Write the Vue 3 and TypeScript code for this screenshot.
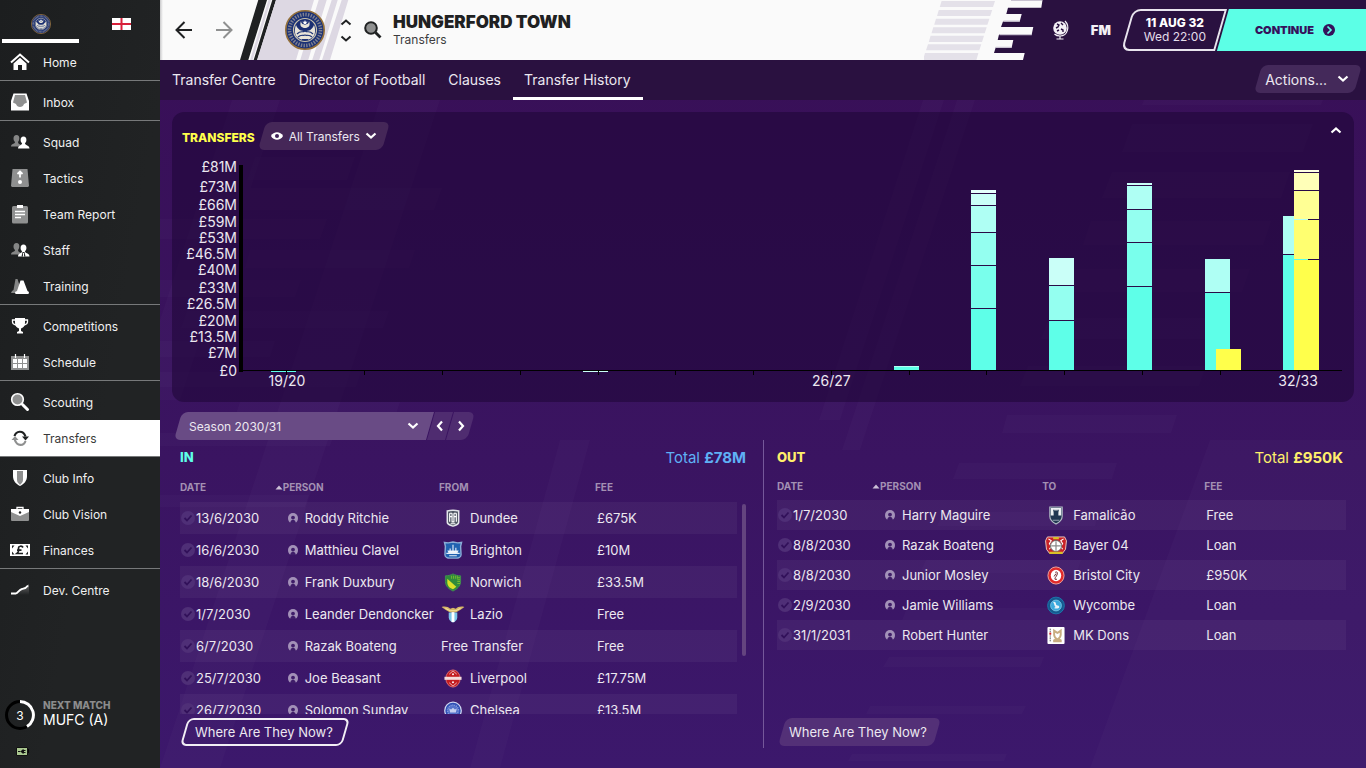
<script setup lang="ts">
interface NavItem { label: string; icon: string; active?: boolean }
interface Season { label: string; shown?: boolean; bought: [number, string][]; sold: [number, string][] }
interface Deal { date: string; person: string; club: string; crest?: string; fee: string }

const nav: NavItem[][] = [
  [{ label: 'Home', icon: 'home' }],
  [{ label: 'Inbox', icon: 'inbox' }],
  [
    { label: 'Squad', icon: 'people' },
    { label: 'Tactics', icon: 'tactics' },
    { label: 'Team Report', icon: 'report' },
    { label: 'Staff', icon: 'staff' },
    { label: 'Training', icon: 'training' },
  ],
  [
    { label: 'Competitions', icon: 'trophy' },
    { label: 'Schedule', icon: 'calendar' },
  ],
  [
    { label: 'Scouting', icon: 'scout' },
    { label: 'Transfers', icon: 'swap', active: true },
  ],
  [
    { label: 'Club Info', icon: 'shield' },
    { label: 'Club Vision', icon: 'case' },
    { label: 'Finances', icon: 'money' },
  ],
  [{ label: 'Dev. Centre', icon: 'growth' }],
]

const tabs = ['Transfer Centre', 'Director of Football', 'Clauses', 'Transfer History']

// Axis values in millions, top to bottom
const axis = [81, 73, 66, 59, 53, 46.5, 40, 33, 26.5, 20, 13.5, 7, 0]
const axisGap = (i: number) => (i < axis.length - 1 ? axis[i] - axis[i + 1] : 0)

const PX_PER_MILLION = 2.5
const barHeight = (v: number) => Math.round(v * PX_PER_MILLION) + 'px'

// Each stack runs from its top segment down: [millions, tint class]
const seasons: Season[] = [
  { label: '19/20', shown: true, bought: [[0.8, 'c0 under']], sold: [] },
  { label: '20/21', bought: [], sold: [] },
  { label: '21/22', bought: [], sold: [] },
  { label: '22/23', bought: [], sold: [] },
  { label: '23/24', bought: [[0.8, 'c4 under']], sold: [] },
  { label: '24/25', bought: [], sold: [] },
  { label: '25/26', bought: [], sold: [] },
  { label: '26/27', shown: true, bought: [], sold: [] },
  { label: '27/28', bought: [[1.6, 'c0 lip']], sold: [] },
  { label: '28/29', bought: [[1.2, 'c5'], [4.4, 'c4'], [10.4, 'c3'], [12.8, 'c2'], [16.8, 'c1'], [24.4, 'c0']], sold: [] },
  { label: '29/30', bought: [[10.8, 'c4'], [13.6, 'c2'], [19.6, 'c0']], sold: [] },
  { label: '30/31', bought: [[0.8, 'c4'], [9.2, 'c3'], [12.8, 'c2'], [17.2, 'c1'], [33.2, 'c0']], sold: [] },
  { label: '31/32', bought: [[13.2, 'c3'], [30.8, 'c0']], sold: [[8.4, 'y0']] },
  { label: '32/33', shown: true, bought: [[15.2, 'c3'], [46, 'c0']], sold: [[0.8, 'y4'], [6.8, 'y3'], [11.2, 'y2'], [15.6, 'y1'], [44, 'y0']] },
]

const incoming: Deal[] = [
  { date: '13/6/2030', person: 'Roddy Ritchie', club: 'Dundee', crest: 'dundee', fee: '£675K' },
  { date: '16/6/2030', person: 'Matthieu Clavel', club: 'Brighton', crest: 'brighton', fee: '£10M' },
  { date: '18/6/2030', person: 'Frank Duxbury', club: 'Norwich', crest: 'norwich', fee: '£33.5M' },
  { date: '1/7/2030', person: 'Leander Dendoncker', club: 'Lazio', crest: 'lazio', fee: 'Free' },
  { date: '6/7/2030', person: 'Razak Boateng', club: 'Free Transfer', fee: 'Free' },
  { date: '25/7/2030', person: 'Joe Beasant', club: 'Liverpool', crest: 'liverpool', fee: '£17.75M' },
  { date: '26/7/2030', person: 'Solomon Sunday', club: 'Chelsea', crest: 'chelsea', fee: '£13.5M' },
]

const outgoing: Deal[] = [
  { date: '1/7/2030', person: 'Harry Maguire', club: 'Famalicão', crest: 'famalicao', fee: 'Free' },
  { date: '8/8/2030', person: 'Razak Boateng', club: 'Bayer 04', crest: 'bayer', fee: 'Loan' },
  { date: '8/8/2030', person: 'Junior Mosley', club: 'Bristol City', crest: 'bristol', fee: '£950K' },
  { date: '2/9/2030', person: 'Jamie Williams', club: 'Wycombe', crest: 'wycombe', fee: 'Loan' },
  { date: '31/1/2031', person: 'Robert Hunter', club: 'MK Dons', crest: 'mkdons', fee: 'Loan' },
]

const sides = [
  { key: 'in', title: 'IN', total: '£78M', where: 'FROM', deals: incoming },
  { key: 'out', title: 'OUT', total: '£950K', where: 'TO', deals: outgoing },
]
</script>

<template>
  <svg class="sprite" aria-hidden="true">
    <defs>
      <linearGradient id="fade" x1="0" y1="0" x2="0" y2="1"><stop offset="0" stop-color="#999" /><stop offset="1" stop-color="#1f2122" /></linearGradient>
    </defs>
    <symbol id="home" viewBox="0 0 20 20"><path d="M1 10.500 10 2.500l9 8" fill="none" stroke="#fff" stroke-width="2" /><path d="M3.500 11.500 10 5.800l6.500 5.700V18H12v-5H8v5H3.500z" fill="#fff" /></symbol>
    <symbol id="inbox" viewBox="0 0 20 20"><path d="M3.500 1.500h13L19 9v9.500H1V9z" fill="#fff" /><path d="M5 3h10l2 7.500-3 1.500c-1 4-7 4-8 0l-3-1.500z" fill="#8f9090" /></symbol>
    <symbol id="people" viewBox="0 0 20 20"><path d="M6.500 3c2 0 3 1.500 2.800 3.500C9.200 8.500 8.500 9.500 8 10c0 2 2 2 3 3v1.500H1c0-3 4-2.500 4-4.500-1-1-1.500-2-1.500-3.500C3.500 4.500 4.500 3 6.500 3z" fill="#858686" /><path d="M13.500 4.500c2 0 3 1.500 2.900 3.500 0 1.500-.6 2.500-1.400 3.200 0 2.300 4.500 1.800 4.500 5.300H8c0-3.500 4-3 4-5.300-.8-.7-1.400-1.700-1.400-3.200 0-2 1-3.500 2.900-3.500z" fill="#fff" /></symbol>
    <symbol id="staff" viewBox="0 0 20 20"><path d="M6.500 3c2 0 3 1.500 2.800 3.500C9.200 8.500 8.500 9.500 8 10c0 2 2 2 3 3v1.500H1c0-3 4-2.500 4-4.500-1-1-1.500-2-1.500-3.500C3.500 4.500 4.500 3 6.500 3z" fill="#858686" /><path d="M13.500 4.500c2 0 3 1.500 2.900 3.500 0 1.500-.6 2.500-1.400 3.200 0 2.300 4.500 1.800 4.500 5.300H8c0-3.500 4-3 4-5.300-.8-.7-1.400-1.700-1.400-3.200 0-2 1-3.500 2.900-3.500z" fill="#fff" /><path d="m12.500 12-1 4.500h4l-1-4.500z" fill="#303233" /><path d="M13.500 13v3.500" stroke="#fff" /></symbol>
    <symbol id="tactics" viewBox="0 0 20 20"><path d="M2.500 1h15L19 18l-1 1H2l-1-1z" fill="#8f9090" /><path d="M10 9.500V4.500M7.500 6 10 3.500 12.500 6" fill="none" stroke="#fff" stroke-width="1.800" /><circle cx="10" cy="14" r="2" fill="#fff" /></symbol>
    <symbol id="report" viewBox="0 0 20 20"><rect x="2" y="2" width="16" height="17.500" rx="1.500" fill="#8f9090" /><path d="M7 1h6v3H7z" fill="#fff" /><path d="M5 7.500h10M5 10.500h10M5 13.500h6" stroke="#fff" stroke-width="1.300" /></symbol>
    <symbol id="training" viewBox="0 0 20 20"><path d="M5.500 3h2L11 14v3H1l1-2 1.500-1z" fill="#858686" /><path d="M10.500 4.500h3L17.500 15l1.500 1-.5 2h-13L5 16l2-1z" fill="#fff" /></symbol>
    <symbol id="trophy" viewBox="0 0 20 20"><path d="M5 2h10v5c0 3-2 5-4 5.500V15l2 1v1.500H7V16l2-1v-2.500C7 12 5 10 5 7z" fill="#fff" /><path d="M5.500 4H2.500v2c0 1.500 1 2.500 3.500 3M14.500 4h3v2c0 1.500-1 2.500-3.500 3" fill="none" stroke="#fff" stroke-width="1.300" /></symbol>
    <symbol id="calendar" viewBox="0 0 20 20"><path d="M1 4h18v14H1z" fill="#8f9090" /><path d="M5.500 2v4M14.500 2v4" stroke="#fff" stroke-width="1.200" /><path d="M3 7h4v4H3zm5 0h4v4H8zm5 0h4v4h-4zM3 12h4v4H3zm5 0h4v4H8zm5 0h4v4h-4z" fill="#fff" /></symbol>
    <symbol id="scout" viewBox="0 0 20 20"><path d="m12.500 12.500 5 5" stroke="#fff" stroke-width="3" stroke-linecap="round" /><circle cx="7.500" cy="7.500" r="5.800" fill="#8f9090" stroke="#fff" stroke-width="1.600" /></symbol>
    <symbol id="swap" viewBox="0 0 20 20"><path d="M4.500 8C6 3 13 1.500 15.500 8.500" fill="none" stroke="#1f2122" stroke-width="2.200" /><path d="M12 8.500h7l-3.500 4z" fill="#1f2122" /><path d="M15.500 13C14 18 7 19 4.700 11.500" fill="none" stroke="#8f9090" stroke-width="2.200" /><path d="M1.500 12h7L5 8z" fill="#8f9090" /></symbol>
    <symbol id="shield" viewBox="0 0 20 20"><path d="M3 2h14v6c0 5-3 8-7 10-4-2-7-5-7-10z" fill="#fff" /><path d="M7 3h6v9c0 2-1.500 3.500-3 5-1.500-1.500-3-3-3-5z" fill="#8f9090" /></symbol>
    <symbol id="case" viewBox="0 0 20 20"><path d="M7 5V3.500h6V5" fill="none" stroke="#fff" stroke-width="1.300" /><rect x="1" y="5" width="18" height="12" rx="1" fill="#8f9090" /><path d="M1 5h18v3l-9 4-9-4z" fill="#fff" /><circle cx="10" cy="8.500" r="1.200" fill="#1f2122" /></symbol>
    <symbol id="money" viewBox="0 0 20 20"><path d="M0 4h20v12H0z" fill="#fff" /><path d="M2 5.500h2.500L2 8.500zm16 0h-2.500L18 8.500zm-16 9h2.500L2 11.500zm16 0h-2.500L18 11.500z" fill="#1f2122" /><path d="M13 7.500c-1-2-4.500-1.500-4.500.5 0 2 1 3.500-1.500 5.500h6M7 10.200h4.500" fill="none" stroke="#1f2122" stroke-width="1.700" /></symbol>
    <symbol id="growth" viewBox="0 0 20 20"><path d="M1 13h5l5-4 5-2 3-3v11H1z" fill="url(#fade)" opacity=".6" /><path d="M1 13.500h5c2-.5 3-4 6-4.500s4-.5 6-3.500" fill="none" stroke="#fff" stroke-width="1.800" /></symbol>

    <symbol id="hungerford" viewBox="0 0 40 40">
      <circle cx="20" cy="20" r="19.200" fill="#1c3275" stroke="#94703a" stroke-width="1.600" />
      <circle cx="20" cy="20" r="15.500" fill="none" stroke="#7f8190" stroke-width="3.600" stroke-dasharray="1.400 1.300" />
      <circle cx="20" cy="20" r="11.500" fill="#1b2f72" stroke="#c9c3ae" stroke-width="1.200" />
      <path d="M11 15c2 5 5 6 9 6s7-1 9-6c2 5 1 10-1 12-4 4-12 4-16 0-2-2-3-7-1-12z" fill="#e8e4d8" />
      <path d="M16 11c0 5 8 5 8 0 2 5-1 7-4 7s-6-2-4-7z" fill="#e8e4d8" /><path d="m20 10 .7 1.800h2l-1.600 1.200.6 2-1.700-1.200-1.700 1.200.6-2-1.600-1.200h2z" fill="#fff" />
      <path d="M12 24c4-4 5-1 8-3 3 2 4-1 8 3M13 27c3-3 5-1 7-2 2 1 4-1 7 2M17 29.500h6" fill="none" stroke="#1c3275" stroke-width="1.200" />
    </symbol>
    <symbol id="dundee" viewBox="0 0 20 20"><path d="M4 2c4-1 8-1 12 0v12c0 3-4 3-6 4-2-1-6-1-6-4z" fill="#4d5462" stroke="#e3e5e9" stroke-width="1.600" /><path d="M6.500 4.500v9M9 4.500v9h2v-9M13.500 4.500v9M6.500 4.500H9M11 4.500h2.500M6.500 8H9m2 0h2.500m-6 7.500h5" fill="none" stroke="#fff" stroke-width="1.200" /></symbol>
    <symbol id="brighton" viewBox="0 0 20 20"><path d="M1 1.500 5 2l5-1 5 1 4-.5-1 4 .5 9c0 2.500-3 3.500-5 3.500h-7c-2 0-5-1-5-3.500l.5-9z" fill="#2162b0" stroke="#8badd6" stroke-width="1.500" /><path d="M3 13h14M5 10.500h10l-1 2H6zM10 4v6M7 8v2.500M13 7v3.500M6 15.500h8" stroke="#e5eef8" stroke-width="1.200" fill="#fff" /></symbol>
    <symbol id="norwich" viewBox="0 0 20 20"><path d="M2 3c3 0 6-1 8-2 2 1 5 2 8 2v6c0 5-4 8-8 10-4-2-8-5-8-10z" fill="#2f8b3b" stroke="#3f8f50" stroke-width="1" /><path d="M4 6v4c0 4 3 6 6 7 1.500-.7 2.500-1.500 3.500-2.500z" fill="#d9e029" /><path d="M8 4.500h8v7" fill="none" stroke="#74b832" stroke-width="3" stroke-dasharray="1 1" /></symbol>
    <symbol id="lazio" viewBox="0 0 26 20"><path d="M1 2c4-1 7 0 9 2l3-1 3 1c2-2 5-3 9-2l-4 3-5 3h-6L5 5z" fill="#d6b668" /><path d="M5 3.500 10 6h6l5-2.500" stroke="#fff1b0" fill="none" stroke-width=".8" /><path d="M8.500 8h9v5c0 3-2 4.500-4.500 5.500C10.500 17.500 8.500 16 8.500 13z" fill="#7dc6ea" /><path d="M11.500 7.500h3V18h-3z" fill="#fff" /></symbol>
    <symbol id="liverpool" viewBox="0 0 20 20"><ellipse cx="10" cy="10" rx="7.500" ry="9" fill="#c41c20" stroke="#dd6c70" stroke-width="1" /><path d="M1 8.200h18v3.200H1z" fill="#f4dcdc" /><path d="M6 5.500 10 2l4 3.500M6 14.500l4 3.500 4-3.500" fill="none" stroke="#efb6b6" stroke-width="1" /><circle cx="10" cy="5.500" r="1" fill="#fff" /><circle cx="10" cy="14" r="1" fill="#fff" /></symbol>
    <symbol id="chelsea" viewBox="0 0 20 20"><circle cx="10" cy="10" r="8.700" fill="#2d4fb5" stroke="#ced7f2" stroke-width="1.300" /><circle cx="10" cy="10" r="5.800" fill="#5573cb" stroke="#8ea2df" stroke-width="1.500" stroke-dasharray="1 1" /><path d="m6 8 2 1 2-2 2 2 2-1-1 4H7z" fill="#c6d0ef" /></symbol>
    <symbol id="famalicao" viewBox="0 0 20 20"><path d="M3.500 1h13v10c0 4-3 6-6.500 8-3.500-2-6.500-4-6.500-8z" fill="#203752" stroke="#b5bdc7" stroke-width="1.200" /><path d="M4.500 2h11v8h-11z" fill="#eef1f3" /><path d="M7.500 13V7L7 4h1.500v1h1V4h1v1h1V4H13l-.5 3v6z" fill="#203752" /><path d="M6.500 15h7" stroke="#9aa7b5" stroke-width="1" /></symbol>
    <symbol id="bayer" viewBox="0 0 24 20"><path d="M3 1h18l2 4-1 9-3 4H5l-3-4-1-9z" fill="#c92228" stroke="#efc9bf" stroke-width="1" /><path d="M4 3l3 2-2 3 2 3-2 3M20 3l-3 2 2 3-2 3 2 3" fill="none" stroke="#fff" stroke-width="1.100" /><circle cx="12" cy="10.500" r="5.800" fill="#fff" stroke="#6c6a68" stroke-width="1" /><path d="M12 5.500v10M7 10.500h10" stroke="#8b8b8b" stroke-width="1.300" /><path d="M9 1h6v2.500H9zM5 16.500h14V19H5z" fill="#d8bf28" /></symbol>
    <symbol id="bristol" viewBox="0 0 20 20"><ellipse cx="10" cy="10" rx="8.500" ry="9" fill="#e12a2a" stroke="#f1a7a0" stroke-width="1" /><ellipse cx="10" cy="10" rx="5.500" ry="6" fill="#fff" /><path d="M9 7c2-2 3 0 2 2.500S8.500 12 9 14h2M10 8l-2 3" fill="none" stroke="#6e2026" stroke-width="1" /></symbol>
    <symbol id="wycombe" viewBox="0 0 20 20"><circle cx="10" cy="10" r="8.800" fill="#155a8f" stroke="#1b79ad" stroke-width="1" /><circle cx="10" cy="10" r="5.700" fill="#3aa9dc" stroke="#84cdea" stroke-width=".8" /><path d="M7 6.500c1-1 3 0 3 2s3 1 3.500 3c0 1.500-4 2.500-5.500 1l1.500-1C8 10.500 8.500 8 7 6.500z" fill="#e9f3f8" /></symbol>
    <symbol id="mkdons" viewBox="0 0 20 20"><rect x="1" y="1" width="18" height="18" rx="1" fill="#fff" /><path d="M7 3l4.500 3L16 3v6c0 2-1 3.500-2 4.500l2 1V17H7v-2.500l2-1C8 12.500 7 11 7 9z" fill="#c9ad80" /><path d="M9 7c0 3 .5 4.500 2.500 6 2-1.500 2.500-3 2.500-6l-2.500 1.500z" fill="#fff" /><path d="M4 3v14" stroke="#686868" stroke-dasharray="1 1" stroke-width="1.500" /><path d="M3 7h2v2H3z" fill="#d22" /></symbol>
  </svg>

  <div class="app">
    <aside class="side">
      <div class="side-top">
        <button class="team on" type="button" aria-label="Club"><svg width="20" height="20"><use href="#hungerford" /></svg></button>
        <button class="team" type="button" aria-label="Nation">
          <svg width="19" height="12" viewBox="0 0 19 12"><path d="M0 0h19v12H0z" fill="#fff" /><path d="M9.500 0v12M0 6h19" stroke="#d8203a" stroke-width="2" /></svg>
        </button>
      </div>
      <nav class="menu">
        <div v-for="(group, g) in nav" :key="g" class="group">
          <a v-for="item in group" :key="item.label" href="#" class="item" :class="{ active: item.active }">
            <svg width="20" height="20"><use :href="'#' + item.icon" /></svg>{{ item.label }}
          </a>
        </div>
      </nav>
      <div class="next">
        <div class="days">
          <svg width="30" height="30" viewBox="0 0 30 30"><circle cx="15" cy="15" r="13.500" fill="none" stroke="#000" stroke-width="3" /><path d="M15 1.500A13.500 13.500 0 0 1 22 26.500" fill="none" stroke="#fff" stroke-width="3" /></svg>
          <span>3</span>
        </div>
        <div class="match"><small>NEXT MATCH</small><span>MUFC (A)</span></div>
      </div>
      <svg class="power" width="13" height="9" viewBox="0 0 13 9"><path d="M11 2h2v4h-2z" fill="#050505" /><path d="M.5.500h11v8H.500z" fill="#a9c78f" stroke="#111" /><path d="M2 4.500h2.500M9.500 3.500H8M9.500 5.500H8" stroke="#111" /><path d="M8 2.500v4H6.500L4.500 4.500l2-2z" fill="#111" /></svg>
    </aside>

    <main class="main">
      <svg class="backdrop" viewBox="160 100 1206 668" preserveAspectRatio="xMidYMid slice" aria-hidden="true">
        <g fill="#fff" fill-opacity=".018">
          <path d="M923 100h21L840 420h-21zM957 100h18L860 450h-18zM380 100h60L220 768h-60zM232 100h48L180 400h-20v-80zM560 440h30L500 768h-30z" />
          <path d="M1144 100h179l-2 5h-179zM1132 124h181l-10 28h-181zM1112 172h178l-9 26h-179zM1091 221h180l-8 24h-180zM1070 269h180l-8 23h-180zM1049 318h180l-8 21h-180zM1028 366h178l-7 20h-179zM1007 415h170l-6 18h-169zM959 463h158l-5 16H953zM943 512h156l-4 14H937zM926 560h155l-4 13H920zM907 608h155l-4 12H902zM889 657h155l-4 10H883zM870 706h156l-4 8H866zM852 754h155l-3 7H848z" />
          <path d="M255 157h100l-8 23H247zM250 188h192l-8 22H243zM160 219h167l-7 20H160zM250 250h165l-6 18H245zM160 280h141l-6 17H160zM187 311h202l-6 17H181zM160 341h115l-5 16H160zM160 372h201l-5 15H160zM240 402h160l-5 15H235zM160 433h175l-5 13H160zM160 495h149l-4 12H160z" />
          <path d="M1210 440h156v328h-276zM1290 440h20l-100 328h-22zM1350 460l16-20v40l-90 288h-20z" />
        </g>
      </svg>

      <header class="bar">
        <div class="club">
          <svg class="stripes" width="112" height="60" viewBox="240 0 112 60" aria-hidden="true">
            <path d="M258.300 0h8.700l-18.700 60H240zM272.300 0h3.700l-18.700 60h-3.600z" fill="#1f2122" />
            <path d="M268.500 0h2.500l-18.400 60H250zM276 0h38l-18 60h-39zM318.700 0h8l-18.500 60h-8zM331.700 0h6l-18.500 60h-7zM341.700 0h6.600L330 60h-8z" fill="#ddd8e3" />
          </svg>
          <button class="plain" type="button" aria-label="Back"><svg width="18" height="18" viewBox="0 0 18 18"><path d="M17 9H1.500M9.500 1 1.500 9l8 8" fill="none" stroke="#1f2122" stroke-width="2" /></svg></button>
          <button class="plain fwd" type="button" aria-label="Forward"><svg width="18" height="18" viewBox="0 0 18 18"><path d="M1 9h15.500M8.500 1l8 8-8 8" fill="none" stroke="#8f9090" stroke-width="2" /></svg></button>
          <svg class="crest" width="40" height="40"><use href="#hungerford" /></svg>
          <div class="updown">
            <button class="plain" type="button" aria-label="Previous club"><svg width="12" height="7" viewBox="0 0 12 7"><path d="m1.500 5.500 4.500-4 4.500 4" fill="none" stroke="#1f2122" stroke-width="2" /></svg></button>
            <button class="plain" type="button" aria-label="Next club"><svg width="12" height="7" viewBox="0 0 12 7"><path d="m1.500 1.500 4.500 4 4.500-4" fill="none" stroke="#1f2122" stroke-width="2" /></svg></button>
          </div>
          <button class="plain" type="button" aria-label="Search"><svg width="18" height="18" viewBox="0 0 18 18"><path d="m11.500 11.500 5 5" stroke="#1f2122" stroke-width="2.800" /><circle cx="7" cy="7" r="5.800" fill="#8f9090" stroke="#1f2122" stroke-width="2" /></svg></button>
          <div class="titles"><h1>HUNGERFORD TOWN</h1><p>Transfers</p></div>
        </div>
        <svg class="edge" width="121" height="60" viewBox="0 0 121 60" aria-hidden="true">
          <path d="M0 0h119.500l-1.200 7.700H85l-1.700 6.300h15.400L96.700 21.500H80L78 27h32.300l-1.600 7.500H76L74.700 40h15.600l-1.600 7.500h-16L71 53h30.700L100 60H0z" fill="#fafafa" />
          <path d="M18.600 1h53.400l-2 6H16.800zM15.800 10h53.400l-2 6H14zM13 18.700h53.400l-2 6H11.200zM10.300 27.300h53.400l-2 6H8.500zM7.600 35.700H61l-2 6.300H5.800zM5 44.300h53.300l-2 6H3zM2 53h53.400l-2 7H0z" fill="#e4e1e9" />
          <path d="M88 0h31v1H88zM80.500 20.500h16.300v1.300H80.500zM76.500 34h32.300v1.200H76.500zM72.700 46.800h16v1.200h-16z" fill="#c9c3d1" />
        </svg>
        <div class="right">
          <button class="plain" type="button" aria-label="World">
            <svg width="18" height="20" viewBox="0 0 18 20"><circle cx="8" cy="8" r="6.800" fill="#f4f1f6" /><path d="m5 4 2 1-1 2-2 1M9 3l2 2M9 9l2 1v2M5 11l2-1" fill="none" stroke="#2a1140" stroke-width="1.400" /><path d="M13 1c5 5 3 15-5 15-2 0-4-.5-5.500-2M8 16v2.500M4.500 19h7" fill="none" stroke="#f4f1f6" stroke-width="1.200" /></svg>
          </button>
          <button class="plain fm" type="button">FM</button>
          <div class="clock"><div class="date"><b>11 AUG 32</b><span>Wed 22:00</span></div></div>
          <button class="continue" type="button">
            <span>CONTINUE</span>
            <svg width="12" height="12" viewBox="0 0 12 12"><circle cx="6" cy="6" r="6" fill="#35115b" /><path d="m4.500 2.500 3.500 3.500-3.500 3.500" fill="none" stroke="#5cffe6" stroke-width="1.700" /></svg>
          </button>
        </div>
      </header>

      <nav class="tabs">
        <a v-for="(t, i) in tabs" :key="t" href="#" :class="{ current: i === 3 }">{{ t }}</a>
        <button class="slant actions" type="button"><span>Actions...</span><svg width="12" height="8" viewBox="0 0 12 8"><path d="m1.500 1.500 4.500 4 4.500-4" fill="none" stroke="#fff" stroke-width="2.200" /></svg></button>
      </nav>

      <section class="panel">
        <div class="panel-head">
          <h2>TRANSFERS</h2>
          <label class="slant filter">
            <svg width="12" height="8" viewBox="0 0 12 8"><path d="M0 4c2.500-5 9.500-5 12 0-2.500 5-9.500 5-12 0z" fill="#fff" /><circle cx="6" cy="4" r="2" fill="#3f2259" /></svg>
            <select aria-label="Transfer filter"><option>All Transfers</option></select>
            <svg class="chev" width="12" height="8" viewBox="0 0 12 8"><path d="m1.500 1.500 4.500 4 4.500-4" fill="none" stroke="#fff" stroke-width="2.200" /></svg>
          </label>
          <button class="plain collapse" type="button" aria-label="Collapse"><svg width="12" height="8" viewBox="0 0 12 8"><path d="m1.500 6.500 4.500-4 4.500 4" fill="none" stroke="#fff" stroke-width="2.200" /></svg></button>
        </div>
        <div class="chart">
          <div class="y-axis"><span v-for="(v, i) in axis" :key="v" :style="{ flexGrow: axisGap(i) }">£{{ v ? v + 'M' : '0' }}</span></div>
          <div class="plot">
            <div v-for="s in seasons" :key="s.label" class="season">
              <div class="stacks">
                <div class="stack"><i v-for="(seg, k) in s.bought" :key="k" :class="seg[1]" :style="{ height: barHeight(seg[0]) }"></i></div>
                <div class="stack sold"><i v-for="(seg, k) in s.sold" :key="k" :class="seg[1]" :style="{ height: barHeight(seg[0]) }"></i></div>
              </div>
              <div class="tick"><span v-if="s.shown">{{ s.label }}</span></div>
            </div>
          </div>
        </div>
      </section>

      <div class="picker">
        <label class="season-pick">
          <select aria-label="Season"><option>Season 2030/31</option></select>
          <svg class="chev" width="12" height="8" viewBox="0 0 12 8"><path d="m1.500 1.500 4.500 4 4.500-4" fill="none" stroke="#fff" stroke-width="2.200" /></svg>
        </label>
        <button class="step" type="button" aria-label="Previous season"><svg width="8" height="12" viewBox="0 0 8 12"><path d="M6 1.500 2 6l4 4.500" fill="none" stroke="#fff" stroke-width="2.200" /></svg></button>
        <button class="step last" type="button" aria-label="Next season"><svg width="8" height="12" viewBox="0 0 8 12"><path d="M2 1.500 6 6l-4 4.500" fill="none" stroke="#fff" stroke-width="2.200" /></svg></button>
      </div>

      <div class="deals">
        <section v-for="side in sides" :key="side.key" class="col" :class="side.key">
          <div class="col-head"><h2>{{ side.title }}</h2><p>Total <b>{{ side.total }}</b></p></div>
          <div class="list">
            <div class="clip">
              <table>
                <colgroup><col class="w-date"><col class="w-person"><col class="w-club"><col></colgroup>
                <thead><tr>
                  <th>DATE</th>
                  <th><svg width="8" height="5" viewBox="0 0 8 5"><path d="m.5 4.500 3.500-4 3.500 4z" fill="#cbbfd6" /></svg>PERSON</th>
                  <th>{{ side.where }}</th>
                  <th>FEE</th>
                </tr></thead>
                <tbody>
                  <tr v-for="d in side.deals" :key="d.date + d.person">
                    <td><div class="cell date-cell"><svg width="14" height="14" viewBox="0 0 14 14"><circle cx="7" cy="7" r="7" fill="#4f2f77" /><path d="m3.500 7 2.500 2.500 4.500-5" fill="none" stroke="#32115a" stroke-width="1.800" /></svg>{{ d.date }}</div></td>
                    <td><div class="cell person"><svg width="10" height="11" viewBox="0 0 10 11"><path d="M2 9.500C.8 8.500 0 7 0 5a5 5 0 0 1 10 0c0 2-.8 3.500-2 4.500z" fill="#a391b8" /><circle cx="5" cy="4.600" r="1.900" fill="#3f1d69" /><path d="M2.300 10c0-2 1-3 2.700-3.200C6.700 7 7.700 8 7.700 10z" fill="#3f1d69" /></svg>{{ d.person }}</div></td>
                    <td><div class="cell club-cell" :class="{ bare: !d.crest }"><svg v-if="d.crest" width="26" height="19"><use :href="'#' + d.crest" /></svg>{{ d.club }}</div></td>
                    <td><div class="cell fee">{{ d.fee }}</div></td>
                  </tr>
                </tbody>
              </table>
            </div>
            <div v-if="side.key === 'in'" class="thumb"></div>
          </div>
          <button class="slant now" type="button"><span>Where Are They Now?</span></button>
        </section>
      </div>
    </main>
  </div>
</template>

<style>
body { margin: 0; background: #3b1566; }
</style>

<style scoped>
* { box-sizing: border-box; }
.sprite { position: absolute; width: 0; height: 0; }
svg { display: block; flex: none; }
h1, h2, p { margin: 0; }
button, select { font: inherit; color: inherit; border: 0; background: none; padding: 0; margin: 0; }
select { appearance: none; outline: 0; }
option { color: #222; }
a { color: inherit; text-decoration: none; }
.app {
  display: grid; grid-template: minmax(0, 1fr) / 160px minmax(0, 1fr);
  height: 100vh; min-height: 700px; overflow: hidden;
  font-family: Inter, "Liberation Sans", sans-serif; font-size: 13px; color: #ece8f0;
}

.side { display: flex; flex-direction: column; background: linear-gradient(100deg, #1c1e1f, #212324 60%); color: #f0f0f0; font-size: 12px; }
.side-top { display: flex; height: 43px; padding-left: 2px; }
.team { display: flex; align-items: center; justify-content: center; width: 77px; height: 43px; border-bottom: 4px solid transparent; padding-top: 8px; }
.team + .team { margin-left: 4px; }
.team.on { border-color: #fff; }
.group { padding-top: 3px; border-bottom: 1px solid #77797a; }
.group:first-child { padding-top: 1px; }
.group:last-child { border: 0; }
.item { display: flex; align-items: center; gap: 13px; height: 36px; padding-left: 10px; white-space: nowrap; }
.item.active { background: #fff; color: #3a3a3a; }
.next { display: flex; align-items: center; gap: 8px; margin-top: auto; padding-left: 5px; height: 32px; }
.days { display: grid; place-items: center; color: #fff; }
.days > * { grid-area: 1 / 1; }
.match { display: flex; flex-direction: column; color: #fff; font-size: 14px; line-height: 17px; padding-bottom: 4px; }
.match small { font-size: 10px; line-height: 12px; font-weight: 800; color: #8b8c8c; }
.power { margin: 16px 0 12px 16px; }

.main { position: relative; display: flex; flex-direction: column; min-width: 0; background: linear-gradient(#380f56, #3a1461 60%, #3c186c); isolation: isolate; }
.backdrop { position: absolute; inset: 100px 0 0; width: 100%; height: calc(100% - 100px); z-index: -1; }

.bar { display: flex; height: 60px; flex: none; background: #2a1140; }
.club { position: relative; flex: 1; display: flex; align-items: center; background: linear-gradient(90deg, #c9c9cb, #fafafa 3px); color: #1f2122; padding-left: 15px; isolation: isolate; }
.stripes { position: absolute; left: 80px; top: 0; z-index: -1; }
.plain { display: flex; align-items: center; justify-content: center; }
.fwd { margin-left: 22px; }
.crest { margin-left: 52px; }
.updown { display: flex; flex-direction: column; gap: 9px; margin: 0 12px 0 15px; }
.titles { margin-left: 11px; }
h1 { font-size: 17px; line-height: 20px; font-weight: 900; white-space: nowrap; }
.titles p { font-size: 12px; line-height: 16px; color: #3c3c3e; }
.edge { margin-left: -1px; }
.right { display: flex; align-items: center; padding-left: 8px; }
.fm { margin: 0 12px 0 21px; font-size: 13px; font-weight: 900; color: #f4f1f6; }
.clock { position: relative; width: 98px; height: 42px; isolation: isolate; }
.clock::before { content: ""; position: absolute; inset: 0 0 0 4px; transform: skewX(-16deg); border: 2px solid #e9e5ee; border-radius: 8px 0 0 8px; z-index: -1; }
.date { display: flex; flex-direction: column; align-items: center; justify-content: center; height: 42px; font-size: 12px; line-height: 14px; color: #fff; padding-left: 6px; }
.date b { font-weight: 800; }
.date span { color: #e4deea; }
.continue { position: relative; display: flex; align-items: center; gap: 9px; height: 42px; padding: 0 31px 0 38px; color: #35115b; font-size: 11px; font-weight: 900; background: #5cffe6; clip-path: polygon(12px 0, 100% 0, 100% 100%, 0 100%); margin-left: -4px; }

.tabs { display: flex; align-items: stretch; height: 40px; flex: none; background: #2a1140; font-size: 14px; padding: 0 5px 0 1px; }
.tabs a { display: flex; align-items: center; padding: 2px 12px 0 11px; border-bottom: 3px solid transparent; white-space: nowrap; }
.tabs a.current { border-color: #fff; }

.slant { position: relative; display: flex; align-items: center; height: 28px; isolation: isolate; white-space: nowrap; }
.slant::before { content: ""; position: absolute; inset: 0 3px; transform: skewX(-16deg); border-radius: 6px; background: #44295a; z-index: -1; }
.slant.actions { margin: 5px 0 0 auto; padding: 0 12px 0 10px; gap: 10px; font-size: 14px; }

.panel { margin: 12px 12px 0; height: 290px; flex: none; border-radius: 12px; background: rgba(32, 7, 56, .6); padding: 10px 12px 0 10px; }
.panel-head { display: flex; align-items: center; height: 28px; }
.panel-head h2 { font-size: 12px; font-weight: 800; color: #ffff4b; padding-top: 3px; }
.filter { margin-left: 4px; padding: 0 12px; gap: 6px; font-size: 12px; }
.slant.filter::before { background: #452758; }
.filter .chev { margin-left: -2px; }
.collapse { margin: -12px 0 0 auto; }
.chart { display: flex; margin-top: 15px; }
.y-axis { width: 55px; margin-right: 2px; height: 204px; margin-top: 2px; display: flex; flex-direction: column; align-items: flex-end; font-size: 14px; }
.y-axis span { flex: 0 0 0px; line-height: 0; }
.plot { flex: 1; display: flex; height: 207px; padding: 0 5px; border-left: 4px solid #000; background: linear-gradient(#000, #000) 0 205px / 100% 1px no-repeat; background-origin: border-box; }
.season { flex: 1; display: flex; flex-direction: column; align-items: center; min-width: 0; }
.stacks { width: 100%; height: 205px; flex: none; display: flex; justify-content: center; align-items: flex-end; padding-left: 5px; }
.stack { display: flex; flex-direction: column; gap: 1px; width: 25px; }
.stack.sold { margin-left: -14px; }
.stack i { display: block; }
.stack .under { margin-bottom: -2px; border-top: 1px solid transparent; background-clip: content-box; }
.c0 { background: #5effe8; } .c1 { background: #79ffec; } .c2 { background: #94fff0; } .c3 { background: #affff4; } .c4 { background: #cafff8; } .c5 { background: #e5fffc; }
.lip { border-top: 1px solid #b5fff5; }
.y0 { background: #ffff4b; } .y1 { background: #ffff70; } .y2 { background: #ffff94; } .y3 { background: #ffffb8; } .y4 { background: #ffffe4; }
.tick { position: relative; display: flex; justify-content: center; margin-top: 1px; width: 1px; height: 4px; flex: none; background: #000; font-size: 14px; }
.tick span { flex: none; line-height: 20px; }

.picker { display: flex; align-items: center; margin: 10px 0 0 15px; height: 28px; flex: none; font-size: 12px; }
.season-pick, .step { position: relative; display: flex; align-items: center; height: 28px; isolation: isolate; }
.season-pick { width: 255px; padding: 0 11px 0 14px; }
.season-pick::before, .step::before { content: ""; position: absolute; inset: 0; transform: skewX(-16deg); z-index: -1; background: #4f2c70; }
.season-pick::before { inset: 0 0 0 3px; background: #694b85; border-radius: 6px 0 0 6px; }
.season-pick select { flex: 1; }
.step { justify-content: center; width: 18px; margin-left: 1px; }
.step.last { width: 21px; }
.step.last::before { border-radius: 0 6px 6px 0; }

.deals { flex: 1; min-height: 0; display: grid; grid-template: minmax(0, 1fr) / 1fr 1fr; margin-bottom: 20px; }
.col { min-width: 0; min-height: 0; display: flex; flex-direction: column; padding: 0 17px 2px 20px; }
.col.out { border-left: 1px solid #75589a; padding: 0 20px 2px 13px; }
.col-head { display: flex; justify-content: space-between; align-items: center; height: 34px; flex: none; }
.col-head h2 { font-size: 13px; font-weight: 800; color: #5effe8; }
.col-head p { font-size: 15px; color: #5fb0f5; }
.out .col-head { padding-right: 3px; }
.out .col-head h2, .out .col-head p { color: #ffef6b; }
.list { flex: 1; min-height: 0; display: flex; gap: 5px; overflow: hidden; }
.clip { flex: 1; min-width: 0; overflow: hidden; }
.thumb { width: 4px; height: 152px; margin-top: 30px; border-radius: 2px; background: #64447f; flex: none; }
table { width: 100%; table-layout: fixed; border-collapse: collapse; }
.w-date { width: 17%; }
.w-person { width: 29.5%; }
.w-club { width: 28%; }
.out .w-date { width: 16.7%; }
.out .w-person { width: 29.9%; }
.out .w-club { width: 28.5%; }
th { height: 28px; padding: 0 0 3px; text-align: left; font-size: 10px; font-weight: 700; color: #a390b3; }
.out th { height: 26px; }
th svg { display: inline-block; vertical-align: 1px; }
td { padding: 0; }
tbody tr:nth-child(odd) { background: rgba(255, 255, 255, .045); }
.cell { display: flex; align-items: center; height: 32px; white-space: nowrap; }
.out .cell { height: 30px; }
.date-cell { gap: 1px; padding-left: 1px; }
.person { gap: 7px; padding-left: 13px; }
.club-cell { gap: 4px; padding-left: 1px; }
.club-cell.bare, .fee { padding-left: 2px; }
.slant.now { align-self: flex-start; margin: 4px 0 0 1px; padding: 0 16px 0 14px; font-size: 13px; flex: none; }
.in .slant.now::before { background: none; border: 2px solid #f2eef5; }
.out .slant.now { margin-left: 2px; padding: 0 13px 0 10px; }
.out .slant.now::before { background: #533077; }
</style>
